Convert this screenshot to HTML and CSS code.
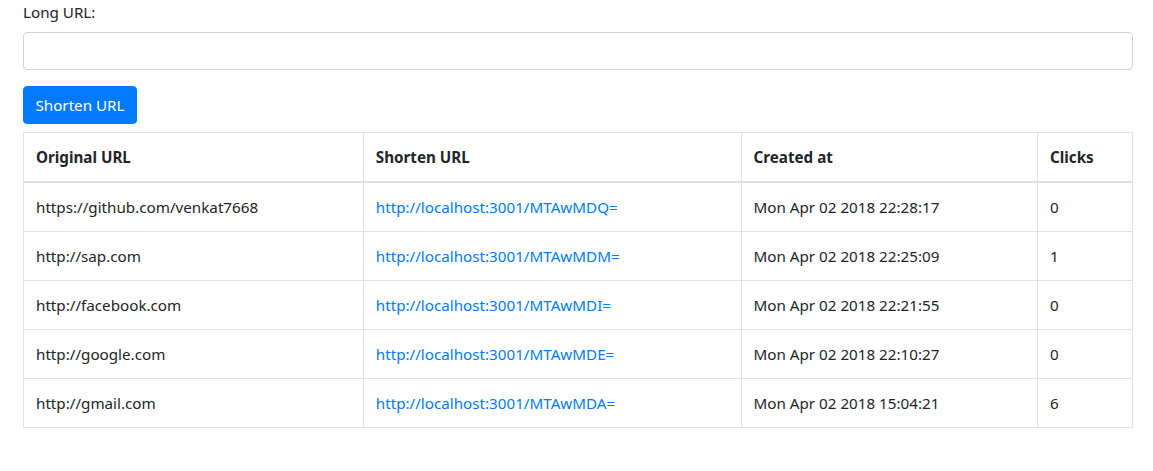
FILE: index.html
```html
<!DOCTYPE html>
<html lang="en">
<head>
<meta charset="utf-8">
<title>URL Shortener</title>
<link rel="stylesheet" href="styles.css">
</head>
<body>
<div class="container">
  <form class="shorten-form">
    <div class="form-group">
      <label class="form-label" for="longUrl">Long URL:</label>
      <input class="form-control" id="longUrl" type="text">
    </div>
    <button class="btn-primary" type="button">Shorten URL</button>
  </form>
  <table class="url-table">
    <thead>
      <tr>
        <th class="col-orig">Original URL</th>
        <th class="col-short">Shorten URL</th>
        <th class="col-date">Created at</th>
        <th class="col-clicks">Clicks</th>
      </tr>
    </thead>
    <tbody>
      <tr>
        <td>https://github.com/venkat7668</td>
        <td><a href="#">http://localhost:3001/MTAwMDQ=</a></td>
        <td>Mon Apr 02 2018 22:28:17</td>
        <td>0</td>
      </tr>
      <tr>
        <td>http://sap.com</td>
        <td><a href="#">http://localhost:3001/MTAwMDM=</a></td>
        <td>Mon Apr 02 2018 22:25:09</td>
        <td>1</td>
      </tr>
      <tr>
        <td>http://facebook.com</td>
        <td><a href="#">http://localhost:3001/MTAwMDI=</a></td>
        <td>Mon Apr 02 2018 22:21:55</td>
        <td>0</td>
      </tr>
      <tr>
        <td>http://google.com</td>
        <td><a href="#">http://localhost:3001/MTAwMDE=</a></td>
        <td>Mon Apr 02 2018 22:10:27</td>
        <td>0</td>
      </tr>
      <tr>
        <td>http://gmail.com</td>
        <td><a href="#">http://localhost:3001/MTAwMDA=</a></td>
        <td>Mon Apr 02 2018 15:04:21</td>
        <td>6</td>
      </tr>
    </tbody>
  </table>
</div>
</body>
</html>
```
FILE: styles.css
```css
* { box-sizing: border-box; }
html, body {
  margin: 0;
  padding: 0;
  background: #fff;
}
body {
  font-family: "Noto Sans", "Open Sans", sans-serif;
  font-size: 15.2px;
  line-height: 24px;
  color: #212529;
}
.container {
  width: 1110px;
  margin-left: 23px;
}
.form-group {
  margin-bottom: 16px;
}
.form-label {
  display: block;
  margin-bottom: 8px;
  height: 24px;
}
.form-control {
  display: block;
  width: 100%;
  height: 38px;
  padding: 6px 12px;
  font: inherit;
  color: #495057;
  background: #fff;
  border: 1px solid #ced4da;
  border-radius: 4px;
  outline: none;
}
.btn-primary {
  display: block;
  height: 38px;
  width: 114px;
  padding: 0;
  font: inherit;
  color: #fff;
  background: #007bff;
  border: 1px solid #007bff;
  border-radius: 4px;
  margin-bottom: 8px;
}
.url-table {
  width: 100%;
  border-collapse: collapse;
  margin-bottom: 16px;
}
.url-table th,
.url-table td {
  padding: 12px;
  border: 1px solid #dee2e6;
  text-align: left;
  vertical-align: top;
  height: 49px;
}
.url-table th {
  font-weight: 700;
  border-bottom-width: 2px;
}
.url-table a {
  color: #007bff;
  text-decoration: none;
}
.col-orig { width: 340px; }
.col-short { width: 378px; }
.col-date { width: 297px; }
.col-clicks { width: 95px; }
```
